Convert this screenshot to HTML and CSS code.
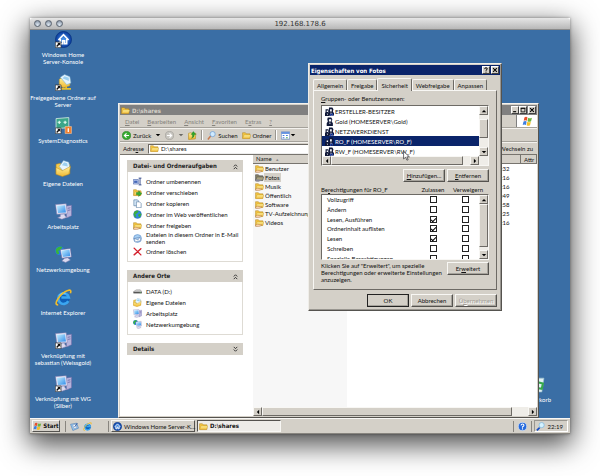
FILE: index.html
```
<!DOCTYPE html>
<html lang="de">
<head>
  <meta charset="UTF-8">
  <meta name="viewport" content="width=device-width,initial-scale=1.0">
  <title>192.168.178.6</title>
  <link rel="stylesheet" href="styles.css">
</head>
<body>

  <!-- Symbole -->
  <svg class="sprite" aria-hidden="true">
    <defs>
      <linearGradient id="g-screen" x1="0" y1="0" x2="1" y2="1"><stop offset="0" stop-color="#c8f0ff"/><stop offset="1" stop-color="#2f8ce8"/></linearGradient>
      <linearGradient id="g-folder" x1="0" y1="0" x2="0" y2="1"><stop offset="0" stop-color="#fff3a0"/><stop offset="1" stop-color="#f0b832"/></linearGradient>
      <radialGradient id="g-home"><stop offset="0" stop-color="#4f9cf0"/><stop offset="1" stop-color="#083a9c"/></radialGradient>
    </defs>
    <symbol id="shortcut" viewBox="0 0 16 16">
      <path fill="#fff" stroke="#222" stroke-width=".6" d="M.3 10.3h5.4v5.4H.3z"/>
      <path fill="#111" d="M2 11h3v3l-1-1-2 2-.9-.9L3 12z"/>
    </symbol>
    <symbol id="home" viewBox="0 0 16 16">
      <circle cx="8" cy="8" r="7.6" fill="url(#g-home)" stroke="#06307c" stroke-width=".6"/>
      <path fill="none" stroke="#fff" stroke-width="1.5" d="M3.2 8.5 8 3.4l4.8 5.1M5 7.5V12h2.2V9.2h1.8V12H11V7.5"/>
    </symbol>
    <symbol id="folder" viewBox="0 0 16 16">
      <path fill="#f2c544" stroke="#a97a12" stroke-width=".8" d="M1 13V3h5l1.500 2H14v8z"/>
      <path fill="url(#g-folder)" stroke="#c2901c" stroke-width=".6" d="M1 13.500 3.500 7H15.500L13.500 13.500z"/>
    </symbol>
    <symbol id="shared" viewBox="0 0 16 16">
      <use href="#folder"/>
      <path fill="#f7cfa8" stroke="#9a6a3c" stroke-width=".7" d="M1 12.500 4.500 11l5 1 2-.5v2L6 15.500 1 15z"/>
    </symbol>
    <symbol id="shared-sel" viewBox="0 0 16 16">
      <path fill="#8b8464" stroke="#4a4a50" d="M1 13V3h5l1.500 2H14v8z"/>
      <path fill="#aaa27c" stroke="#555" d="M1 13.500 3.500 7H15.500L13.500 13.500z"/>
      <path fill="#889" d="M1 12.500 4.500 11l5 1 2-.5v2L6 15.500 1 15z"/>
    </symbol>
    <symbol id="docs" viewBox="0 0 16 16">
      <path fill="#f5cc4e" stroke="#b8861c" stroke-width=".5" d="M1 13V4l4-1 2 2 7-1v9z"/>
      <path fill="#e8f6ff" stroke="#6aa4cc" stroke-width=".5" d="M4 6 8 .5l5 1.500 1 6-5 4z"/>
      <path fill="#9cd0f0" d="m6.500 5 2-3 3 1 .5 3z"/>
      <path fill="url(#g-folder)" stroke="#c2901c" stroke-width=".5" d="M1 13.500V7l6 3 7.500-4-1.500 7.500-6 2z"/>
    </symbol>
    <symbol id="netfolder" viewBox="0 0 16 16">
      <path fill="url(#g-folder)" stroke="#c2901c" stroke-width=".5" d="M4 5 7 3l7 2v6l-6 2-4-2z"/>
      <path fill="#e4f4ff" stroke="#74a8cc" stroke-width=".5" d="M5 3 9 .5l5 2 1 6-4 1.500z"/>
      <path fill="#9cd0f0" d="m7 4 2-2 4 1.500v3z"/>
      <path fill="none" stroke="#e8c030" stroke-width="1.500" d="M6 14h9M10.500 11v3"/>
    </symbol>
    <symbol id="diag" viewBox="0 0 16 16">
      <path fill="#3ba68a" stroke="#cfe6df" stroke-width=".8" d="m1 1.500 12-1v9.500L1 11z"/>
      <path fill="none" stroke="#e8fff4" d="M2.500 5h3M4 3.500v3M8 5h3M9.500 3.500v3"/>
      <path fill="#f08030" stroke="#ffd2a8" stroke-width=".5" d="M9.500 9H15.500v6.500h-6z"/>
      <path stroke="#fff" stroke-width="1.200" d="M12.500 10.500v3.500"/>
    </symbol>
    <symbol id="computer" viewBox="0 0 16 16">
      <path fill="#b8b4dc" stroke="#716ca8" stroke-width=".5" d="m10 3 5.500-1V12L11 14z"/>
      <path stroke="#66629c" stroke-width=".7" d="m12 5 2.500-.5M12 7l2.500-.5"/>
      <path fill="#ecebfa" stroke="#7d7aac" stroke-width=".5" d="m.5 1.500 10-.8 1 9.300-9.800.6z"/>
      <path fill="url(#g-screen)" d="m1.700 2.600 7.800-.6.800 7-7.500.4z"/>
      <path fill="#dcdaf0" stroke="#7d7aac" stroke-width=".5" d="m5 10.500 4-.2.500 2 2 1-5 2-4-1.500 2.500-1z"/>
    </symbol>
    <symbol id="network" viewBox="0 0 16 16">
      <circle cx="4.500" cy="4.500" r="4.300" fill="#2a7be0"/>
      <path fill="#38b43c" d="M1 2.500Q4-.5 7 1L5 4 3 4.500 4 7 2.500 8Q0 6 1 2.500z"/>
      <path fill="#ecebfa" stroke="#66629c" stroke-width=".5" d="m5 3.500 9.500-1.200 1 8-9 1.200z"/>
      <path fill="url(#g-screen)" d="m6 4.400 7.600-1 .8 6-7 1z"/>
      <path fill="#dcdaf0" stroke="#7d7aac" stroke-width=".5" d="m9 11.500 3-.4 2.500 2-4.500 2.400-3.500-1.500z"/>
    </symbol>
    <symbol id="ie" viewBox="0 0 16 16">
      <circle cx="8.500" cy="8.500" r="5.500" fill="#0f5fb8"/>
      <path fill="none" stroke="#3ba6f0" stroke-width="2.500" d="M12.500 11.500A5 5 0 1 1 13 8H6"/>
      <path fill="none" stroke="#b4e6ff" stroke-width=".7" d="M4 6q2-3 6-2"/>
      <path fill="none" stroke="#f3bd28" stroke-width="1.500" d="M3 15Q-1 15 3 9T12 1.500Q16 0 14.500 4"/>
    </symbol>
    <symbol id="bin" viewBox="0 0 16 16">
      <path fill="#dff0f4" stroke="#9cc2cc" stroke-width=".6" d="M2 2h13l-2 13H4z"/>
      <path fill="none" stroke="#35a84c" stroke-width="2" d="M7 11 10 6l4 1-1 5z"/>
    </symbol>
    <symbol id="back" viewBox="0 0 16 16">
      <circle cx="8" cy="8" r="7.300" fill="#36ab30" stroke="#1c7a1a"/>
      <path fill="none" stroke="#fff" stroke-width="2" d="M12.500 8H4.500M8 4.200 4.200 8 8 11.800"/>
    </symbol>
    <symbol id="forward" viewBox="0 0 16 16">
      <circle cx="8" cy="8" r="7.300" fill="#c8c6c0" stroke="#9a9892"/>
      <path fill="none" stroke="#fff" stroke-width="2" d="M3.500 8h8M8 4.200 11.800 8 8 11.800"/>
    </symbol>
    <symbol id="up" viewBox="0 0 16 16">
      <path fill="url(#g-folder)" stroke="#b08418" d="M1 15V4l5-1 2 2 6-1-1 10z"/>
      <path fill="#2da82a" stroke="#14701a" stroke-width=".6" d="M9.500 1 14 6h-2.500q0 5-5 7 2-3 1.500-7H5.500z"/>
    </symbol>
    <symbol id="search" viewBox="0 0 16 16">
      <path stroke="#c77a50" stroke-width="2.600" d="m1.500 15 5-6"/>
      <circle cx="10" cy="5.500" r="4.600" fill="#cfeaff" stroke="#6e9cd0" stroke-width="1.300"/>
    </symbol>
    <symbol id="lens" viewBox="0 0 16 16">
      <path stroke="#1b4fc4" stroke-width="3" d="m1.500 15 5-5"/>
      <circle cx="10" cy="5.500" r="4.600" fill="#d4f2ff" stroke="#7cb4dc" stroke-width="1.300"/>
    </symbol>
    <symbol id="views" viewBox="0 0 16 16">
      <path fill="#fff" stroke="#3a68b8" d="M.5 1.500h15v13H.5z"/>
      <path fill="#3f78d8" d="M1 2h14v3H1zM3 7h3v2H3zM9 7h3v2H9zM3 11h3v2H3z"/>
      <path fill="#3fa858" d="M9 11h3v2H9z"/>
    </symbol>
    <symbol id="flag" viewBox="0 0 16 16">
      <path fill="#e8502c" d="M3.500 2q2.500-1.500 4.500 0L7 7q-2-1.500-4.500 0z"/>
      <path fill="#6cb33e" d="M9 2.500q2.500 1.500 5.500 0l-1.300 5q-2.700 1.500-5.200 0z"/>
      <path fill="#3c7ee0" d="M2.200 8q2.500-1.500 4.500 0l-1 5Q3.500 11.500 1 13z"/>
      <path fill="#f4c026" d="M7.700 8.500q2.500 1.500 5.200 0l-1.200 5q-2.700 1.500-5 0z"/>
    </symbol>
    <symbol id="rename" viewBox="0 0 16 16">
      <path fill="#c9d8f4" stroke="#3a56a0" d="M.5 4.500h9v8h-9z"/>
      <path fill="#4668b8" d="M2 6.500h6v4H2z"/>
      <path fill="none" stroke="#223a80" stroke-width="1.500" d="M10 2h5M12.500 2v12M10 14h5"/>
    </symbol>
    <symbol id="move" viewBox="0 0 16 16">
      <use href="#folder"/>
      <path fill="#35ab32" stroke="#156c1a" stroke-width=".6" d="M6 8h4V5l5.500 5-5.500 5v-3H6z"/>
    </symbol>
    <symbol id="copy" viewBox="0 0 16 16">
      <path fill="#d6e8f8" stroke="#446c98" d="M1.500 1.500H8l2 2V12H1.500z"/>
      <path fill="#fff" stroke="#446c98" d="M6 5h5.500l3 3v7.500H6z"/>
    </symbol>
    <symbol id="web" viewBox="0 0 16 16">
      <circle cx="8" cy="8" r="7" fill="#3188e0" stroke="#1c5488" stroke-width=".6"/>
      <path fill="#3cae3c" d="M2 4Q6-1 10 2L7 6 4 7l2 4-2 2Q0 9 2 4zM10 7l4.500-1q1 4-3 7L9 10z"/>
    </symbol>
    <symbol id="mail" viewBox="0 0 16 16">
      <circle cx="8" cy="8" r="7" fill="#a8d0f4" stroke="#5888c4"/>
      <path fill="#fff" stroke="#5070a0" stroke-width=".8" d="m2 8 10-2.500 2 6L4 14zM2 8l7 2.500 3-5"/>
    </symbol>
    <symbol id="delete" viewBox="0 0 16 16">
      <path stroke="#d42330" stroke-width="2.500" stroke-linecap="round" d="m2 2 12 12M14 3 2 14"/>
    </symbol>
    <symbol id="drive" viewBox="0 0 16 16">
      <path fill="#d0d0d0" stroke="#777" stroke-width=".7" d="m1 8 5-3h7l2.500 3v3H1z"/>
      <path fill="#555" d="M1 8.500h14.500V11H1z"/><path stroke="#6d6" d="M12 10h2"/>
    </symbol>
    <symbol id="users" viewBox="0 0 16 16">
      <path fill="#101838" d="M7 1h6l2 3-1 4 2 3v4H6V9L7 7z"/>
      <path fill="#fff" d="M9 4h3v4L9 8zM9 10l2 3 1-3z"/>
      <path fill="#101838" d="M1 4h5l1 3-1 3 2 2v4H0v-5l1-2z"/>
      <path fill="#fff" d="M3 6h2.500v3H3zM3 12l1.500 2 1-2z"/>
      <path fill="#2848b0" d="M9 12h2v4H9zM12 11h2l1 4h-3z"/>
    </symbol>
    <symbol id="user" viewBox="0 0 16 16">
      <path fill="#101838" d="M5 1h6l2 3-1 4 2 3v5H3v-5l2-3-1-4z"/>
      <path fill="#fff" d="M7 4h4v4H7zM7 10l2 3 1-3z"/>
    </symbol>
    <symbol id="chev-up" viewBox="0 0 8 8"><path fill="none" stroke="#222" d="m2 4 2-2 2 2M2 7l2-2 2 2"/></symbol>
    <symbol id="chev-down" viewBox="0 0 8 8"><path fill="none" stroke="#222" d="m2 1 2 2 2-2M2 4l2 2 2-2"/></symbol>
    <symbol id="tri-left" viewBox="0 0 8 8"><path d="M5.500 1v6l-3-3z"/></symbol>
    <symbol id="tri-right" viewBox="0 0 8 8"><path d="M2.500 1v6l3-3z"/></symbol>
    <symbol id="tri-up" viewBox="0 0 8 8"><path d="M1 5.500h6l-3-3z"/></symbol>
    <symbol id="tri-down" viewBox="0 0 8 8"><path d="M1 2.500h6l-3 3z"/></symbol>
    <symbol id="x" viewBox="0 0 8 8"><path stroke="#000" stroke-width="1.400" d="m1.500 1.500 5 5m0-5-5 5"/></symbol>
    <symbol id="min" viewBox="0 0 8 8"><path d="M1.500 5.500h4V7h-4z"/></symbol>
    <symbol id="max" viewBox="0 0 8 8"><path fill="none" stroke="#000" d="M1.500 1.500h5v5h-5zM1 2h6"/></symbol>
    <symbol id="help" viewBox="0 0 8 8"><path fill="none" stroke="#000" stroke-width="1.300" d="M2.300 2.800q0-1.800 1.700-1.800t1.700 1.500Q5.700 3.500 4 4.200v.8M4 6.200v1.300"/></symbol>
    <symbol id="info" viewBox="0 0 16 16">
      <circle cx="8" cy="8" r="7.300" fill="#2468dc" stroke="#d8e8ff"/>
      <path fill="none" stroke="#fff" stroke-width="2" d="M5.500 6q0-2.500 2.500-2.500T10.500 6Q10.500 7.500 8 8.500v1.500M8 11.200v2"/>
    </symbol>
    <symbol id="desk" viewBox="0 0 16 16">
      <path fill="#9cc8f0" stroke="#4878b0" d="m1 4 11-2 3 9-10 4z"/>
      <path fill="#fff" stroke="#5878a0" stroke-width=".7" d="m5 5 5-1 2 6-5 1.500z"/>
      <path stroke="#2450a0" stroke-width="1.500" d="m8 9 5-7"/>
    </symbol>
  </svg>

  <main class="remote">
    <header class="remote-title">
      <div class="lights"><button aria-label="Schließen"></button><button aria-label="Minimieren"></button><button aria-label="Zoomen"></button></div>
      <h1>192.168.178.6</h1>
    </header>

    <div class="desktop">
      <!-- Desktop-Symbole -->
      <nav class="shortcuts">
        <a href="#"><svg><use href="#home"/><use href="#shortcut"/></svg>Windows Home<br>Server-Konsole</a>
        <a href="#"><svg><use href="#netfolder"/><use href="#shortcut"/></svg>Freigegebene Ordner auf<br>Server</a>
        <a href="#"><svg><use href="#diag"/><use href="#shortcut"/></svg>SystemDiagnostics</a>
        <a href="#"><svg><use href="#docs"/></svg>Eigene Dateien</a>
        <a href="#"><svg><use href="#computer"/></svg>Arbeitsplatz</a>
        <a href="#"><svg><use href="#network"/></svg>Netzwerkumgebung</a>
        <a href="#"><svg><use href="#ie"/></svg>Internet Explorer</a>
        <a href="#"><svg><use href="#computer"/><use href="#shortcut"/></svg>Verknüpfung mit<br>sebastian (Weissgold)</a>
        <a href="#"><svg><use href="#computer"/><use href="#shortcut"/></svg>Verknüpfung mit WG<br>(Silber)</a>
      </nav>
      <a class="bin" href="#"><svg><use href="#bin"/></svg>Papierkorb</a>

      <!-- Explorer -->
      <section class="explorer">
        <header class="explorer-title">
          <svg class="icon"><use href="#folder"/></svg><h2>D:\shares</h2>
          <div class="window-buttons">
            <button aria-label="Minimieren"><svg><use href="#min"/></svg></button>
            <button aria-label="Maximieren"><svg><use href="#max"/></svg></button>
            <button class="close" aria-label="Schließen"><svg><use href="#x"/></svg></button>
          </div>
        </header>
        <div class="menu-row">
          <nav class="menu">
            <button><u>D</u>atei</button><button><u>B</u>earbeiten</button><button><u>A</u>nsicht</button><button><u>F</u>avoriten</button><button>E<u>x</u>tras</button><button><u>?</u></button>
          </nav>
          <div class="brand"><svg><use href="#flag"/></svg></div>
        </div>
        <div class="toolbar">
          <button><svg class="icon"><use href="#back"/></svg>Zurück</button>
          <button class="drop" aria-label="Verlauf"><svg><use href="#tri-down"/></svg></button>
          <button aria-label="Vorwärts"><svg class="icon"><use href="#forward"/></svg></button>
          <button class="drop dim" aria-label="Verlauf vorwärts"><svg><use href="#tri-down"/></svg></button>
          <button aria-label="Aufwärts"><svg class="icon"><use href="#up"/></svg></button>
          <span class="line"></span>
          <button><svg class="icon"><use href="#search"/></svg>Suchen</button>
          <button><svg class="icon"><use href="#folder"/></svg>Ordner</button>
          <span class="line"></span>
          <button class="views" aria-label="Ansichten"><svg class="icon"><use href="#views"/></svg><svg class="arrow"><use href="#tri-down"/></svg></button>
        </div>
        <div class="address">
          <label for="address">Adre<u>s</u>se</label>
          <div class="address-box"><svg class="icon"><use href="#folder"/></svg><input id="address" type="text" value="D:\shares"></div>
          <button>Wechseln zu</button>
        </div>

        <div class="explorer-body">
          <aside class="tasks">
            <section class="task-group">
              <h3>Datei- und Ordneraufgaben<svg><use href="#chev-up"/></svg></h3>
              <ul>
                <li><svg class="icon"><use href="#rename"/></svg><a href="#">Ordner umbenennen</a></li>
                <li><svg class="icon"><use href="#move"/></svg><a href="#">Ordner verschieben</a></li>
                <li><svg class="icon"><use href="#copy"/></svg><a href="#">Ordner kopieren</a></li>
                <li><svg class="icon"><use href="#web"/></svg><a href="#">Ordner im Web veröffentlichen</a></li>
                <li><svg class="icon"><use href="#shared"/></svg><a href="#">Ordner freigeben</a></li>
                <li><svg class="icon"><use href="#mail"/></svg><a href="#">Dateien in diesem Ordner in E-Mail<br>senden</a></li>
                <li><svg class="icon"><use href="#delete"/></svg><a href="#">Ordner löschen</a></li>
              </ul>
            </section>
            <section class="task-group">
              <h3>Andere Orte<svg><use href="#chev-up"/></svg></h3>
              <ul>
                <li><svg class="icon"><use href="#drive"/></svg><a href="#">DATA (D:)</a></li>
                <li><svg class="icon"><use href="#docs"/></svg><a href="#">Eigene Dateien</a></li>
                <li><svg class="icon"><use href="#computer"/></svg><a href="#">Arbeitsplatz</a></li>
                <li><svg class="icon"><use href="#network"/></svg><a href="#">Netzwerkumgebung</a></li>
              </ul>
            </section>
            <section class="task-group">
              <h3>Details<svg><use href="#chev-down"/></svg></h3>
            </section>
          </aside>

          <div class="files">
            <table>
              <thead><tr><th class="col-name">Name <span class="sort">▲</span></th><th></th><th class="col-attr">Attr</th></tr></thead>
              <tbody>
                <tr><td><svg class="icon"><use href="#shared"/></svg><span>Benutzer</span></td><td>:32</td><td></td></tr>
                <tr class="selected"><td><svg class="icon"><use href="#shared-sel"/></svg><span>Fotos</span></td><td>:16</td><td></td></tr>
                <tr><td><svg class="icon"><use href="#shared"/></svg><span>Musik</span></td><td>:16</td><td></td></tr>
                <tr><td><svg class="icon"><use href="#folder"/></svg><span>Öffentlich</span></td><td>:49</td><td></td></tr>
                <tr><td><svg class="icon"><use href="#shared"/></svg><span>Software</span></td><td>:58</td><td></td></tr>
                <tr><td><svg class="icon"><use href="#shared"/></svg><span>TV-Aufzeichnungen</span></td><td>:25</td><td></td></tr>
                <tr><td><svg class="icon"><use href="#shared"/></svg><span>Videos</span></td><td>:16</td><td></td></tr>
              </tbody>
            </table>
            <div class="files-rest"></div>
            <div class="scroll-h">
              <button aria-label="Nach links"><svg><use href="#tri-left"/></svg></button>
              <span class="thumb"></span>
              <button aria-label="Nach rechts"><svg><use href="#tri-right"/></svg></button>
            </div>
          </div>
        </div>
      </section>

      <!-- Eigenschaften -->
      <section class="dialog" role="dialog" aria-labelledby="dialog-title">
        <header class="dialog-title">
          <h2 id="dialog-title">Eigenschaften von Fotos</h2>
          <div class="window-buttons">
            <button aria-label="Hilfe"><svg><use href="#help"/></svg></button>
            <button class="close" aria-label="Schließen"><svg><use href="#x"/></svg></button>
          </div>
        </header>
        <nav class="tabs">
          <button>Allgemein</button><button>Freigabe</button><button class="active">Sicherheit</button><button>Webfreigabe</button><button>Anpassen</button>
        </nav>
        <div class="panel">
          <p class="caption"><u>G</u>ruppen- oder Benutzernamen:</p>
          <div class="listbox">
            <div class="list-main">
              <ul class="users">
                <li><svg class="icon"><use href="#users"/></svg>ERSTELLER-BESITZER</li>
                <li><svg class="icon"><use href="#user"/></svg>Gold (HOMESERVER\Gold)</li>
                <li><svg class="icon"><use href="#users"/></svg>NETZWERKDIENST</li>
                <li class="active"><svg class="icon"><use href="#users"/></svg>RO_F (HOMESERVER\RO_F)</li>
                <li><svg class="icon"><use href="#users"/></svg>RW_F (HOMESERVER\RW_F)</li>
              </ul>
              <div class="scroll-h">
                <button aria-label="Nach links"><svg><use href="#tri-left"/></svg></button>
                <span class="thumb"></span>
                <button aria-label="Nach rechts"><svg><use href="#tri-right"/></svg></button>
              </div>
            </div>
            <div class="scroll-v user-scroll">
              <button aria-label="Nach oben"><svg><use href="#tri-up"/></svg></button>
              <span class="thumb"></span>
              <button aria-label="Nach unten"><svg><use href="#tri-down"/></svg></button>
            </div>
          </div>
          <div class="panel-buttons">
            <button class="btn"><u>H</u>inzufügen...</button><button class="btn"><u>E</u>ntfernen</button>
          </div>
          <div class="rights-head"><span>Be<u>r</u>echtigungen für RO_F</span><span>Zulassen</span><span>Verweigern</span></div>
          <div class="listbox rights">
            <div class="rights-clip">
              <table>
                <tr><td>Vollzugriff</td><td><input type="checkbox" aria-label="Vollzugriff zulassen"></td><td><input type="checkbox" aria-label="Vollzugriff verweigern"></td></tr>
                <tr><td>Ändern</td><td><input type="checkbox" aria-label="Ändern zulassen"></td><td><input type="checkbox" aria-label="Ändern verweigern"></td></tr>
                <tr><td>Lesen, Ausführen</td><td><input type="checkbox" checked aria-label="Ausführen zulassen"></td><td><input type="checkbox" aria-label="Ausführen verweigern"></td></tr>
                <tr><td>Ordnerinhalt auflisten</td><td><input type="checkbox" checked aria-label="Auflisten zulassen"></td><td><input type="checkbox" aria-label="Auflisten verweigern"></td></tr>
                <tr><td>Lesen</td><td><input type="checkbox" checked aria-label="Lesen zulassen"></td><td><input type="checkbox" aria-label="Lesen verweigern"></td></tr>
                <tr><td>Schreiben</td><td><input type="checkbox" aria-label="Schreiben zulassen"></td><td><input type="checkbox" aria-label="Schreiben verweigern"></td></tr>
                <tr><td>Spezielle Berechtigungen</td><td><input type="checkbox" aria-label="Spezielle zulassen"></td><td><input type="checkbox" aria-label="Spezielle verweigern"></td></tr>
              </table>
            </div>
            <div class="scroll-v">
              <button aria-label="Nach oben"><svg><use href="#tri-up"/></svg></button>
              <span class="thumb"></span>
              <button aria-label="Nach unten"><svg><use href="#tri-down"/></svg></button>
            </div>
          </div>
          <div class="note">
            <p>Klicken Sie auf "Erweitert", um spezielle<br>Berechtigungen oder erweiterte Einstellungen<br>anzuzeigen.</p>
            <button class="btn">Er<u>w</u>eitert</button>
          </div>
        </div>
        <footer class="dialog-buttons">
          <button class="btn default">OK</button><button class="btn">Abbrechen</button><button class="btn" disabled>Ü<u>b</u>ernehmen</button>
        </footer>
        <svg class="cursor" viewBox="0 0 8 12"><path fill="#fff" stroke="#222" stroke-width=".8" d="M.5.500v9L3 7.500 4.500 11 6 10.500 4.500 7h3z"/></svg>
      </section>
    </div>

    <!-- Taskleiste -->
    <footer class="taskbar">
      <button class="start"><svg class="icon"><use href="#flag"/></svg>Start</button>
      <div class="quick">
        <button aria-label="Desktop anzeigen"><svg class="icon"><use href="#desk"/></svg></button>
        <button aria-label="Internet Explorer"><svg class="icon"><use href="#ie"/></svg></button>
      </div>
      <div class="running">
        <button><svg class="icon"><use href="#home"/></svg>Windows Home Server-K...</button>
        <button class="active"><svg class="icon"><use href="#folder"/></svg>D:\shares</button>
      </div>
      <div class="lang"><svg class="icon"><use href="#info"/></svg></div>
      <div class="tray"><svg class="icon"><use href="#lens"/></svg><time>22:19</time></div>
    </footer>
  </main>

</body>
</html>
```
FILE: styles.css
```
/* Grundlagen */
* { margin:0; padding:0; box-sizing:border-box; }
body {
  background:#fff; color:#111; min-height:100vh; padding:18px 30px 42px;
  display:flex; flex-direction:column; overflow:hidden;
  font:6px/7px "Lato",sans-serif;
}
button, input { font:inherit; color:inherit; background:none; border:none; border-radius:0; white-space:nowrap; }
button { display:flex; align-items:center; justify-content:center; }
a { color:inherit; text-decoration:none; }
ul { list-style:none; }
h1, h2, h3 { font-size:inherit; }
svg { display:block; flex:none; overflow:visible; }
.sprite { position:absolute; width:0; height:0; }
.icon { width:9px; height:9px; }

/* Fenster der Remoteverbindung */
.remote {
  flex:1; display:flex; flex-direction:column;
  box-shadow:0 0 3px rgba(0,0,0,.4), 0 9px 26px 2px rgba(0,0,0,.7);
}
.remote-title {
  height:12px; display:grid; grid-template-columns:1fr auto 1fr; align-items:center;
  background:linear-gradient(#e6e6e6,#b8b8b8); border-bottom:1px solid #8a8a8a;
  border-radius:3px 3px 0 0;
}
.remote-title h1 { font:7px/10px "DejaVu Sans",sans-serif; color:#333; }
.lights { display:flex; gap:4px; padding-left:4px; }
.lights button {
  width:7px; height:7px; border-radius:50%; border:1px solid #59626e;
  background:radial-gradient(circle at 50% 80%,#e0eaf4,#7e8c9e);
}

/* Desktop */
.desktop { position:relative; flex:1; background:#3a6ea5; overflow:hidden; }
.shortcuts { width:66px; display:grid; grid-template-columns:100%; grid-auto-rows:43px; padding-top:1px; }
.shortcuts a, .bin {
  display:flex; flex-direction:column; align-items:center;
  color:#fff; text-align:center; white-space:nowrap;
}
.shortcuts svg, .bin svg { width:17px; height:17px; margin-bottom:3px; }
.bin { position:absolute; right:19px; bottom:15px; }

/* Explorer */
.explorer {
  position:absolute; left:88px; top:73px; right:31px; bottom:0;
  display:flex; flex-direction:column; padding:1px;
  background:#d4d0c8; border:1px solid #f4f2ee; border-right-color:#55534f; border-bottom-color:#55534f;
}
.explorer-title {
  display:flex; align-items:center; gap:2px; height:10px; padding:0 1px;
  background:#808080; color:#d4d0c8;
}
.explorer-title h2, .dialog-title h2 { flex:1; font:bold 6px/9px "DejaVu Sans Condensed",sans-serif; }
.window-buttons { display:flex; }
.window-buttons button {
  width:8px; height:8px; background:#d4d0c8; color:#000;
  border:1px solid #fff; border-right-color:#404040; border-bottom-color:#404040;
}
.window-buttons svg { width:6px; height:6px; }
.window-buttons .close { margin-left:1px; }
.menu-row { display:flex; height:13px; border-bottom:1px solid #a5a29b; }
.menu { flex:1; display:flex; gap:8px; padding-left:5px; color:#85827c; }
.brand { width:21px; display:grid; place-items:center; background:#fff; border-left:1px solid #808080; }
.brand svg { width:11px; height:11px; }
.toolbar {
  display:flex; align-items:center; gap:4px; height:14px; padding-left:2px;
  border-top:1px solid #f4f2ee; border-bottom:1px solid #a5a29b;
}
.toolbar button { gap:2px; }
.toolbar .drop svg, .arrow { width:6px; height:6px; }
.toolbar .views { gap:0; }
.dim { opacity:.5; }
.line { width:2px; height:10px; border-left:1px solid #99968f; border-right:1px solid #fff; }
.address {
  display:flex; align-items:center; gap:4px; height:12px; padding:0 4px 0 3px;
  border-top:1px solid #f4f2ee;
}
.address-box {
  flex:1; height:10px; display:flex; align-items:center; gap:2px; padding-left:1px;
  background:#fff; border:1px solid #6d6a65; border-right-color:#eee; border-bottom-color:#eee;
}
.address-box input { flex:1; min-width:0; outline:none; }

.explorer-body { flex:1; min-height:0; display:flex; background:#fff; border-top:1px solid #77746e; }
.tasks { flex:none; width:133px; padding:5px 10px 0 7px; display:flex; flex-direction:column; gap:8px; }
.task-group h3 {
  display:flex; align-items:center; justify-content:space-between; height:12px; padding:0 4px 0 6px;
  background:#d4d0c8; color:#222; font:bold 6px/12px "DejaVu Sans Condensed",sans-serif;
}
.task-group h3 svg { width:7px; height:7px; }
.task-group ul { padding:4px 5px; border:1px solid #dedbd4; border-top:none; }
.task-group li { display:flex; align-items:center; gap:4px; min-height:10px; margin-bottom:1px; white-space:nowrap; }

.files { flex:1; min-width:0; display:flex; flex-direction:column; }
.files table { width:100%; border-collapse:collapse; table-layout:fixed; }
.files th {
  height:8px; background:#d4d0c8; text-align:left; font-weight:normal; padding-left:3px; white-space:nowrap;
  border-right:1px solid #77746e; border-bottom:1px solid #77746e;
}
.sort { font-size:4px; color:#888; padding-left:2px; }
.col-name { width:94px; }
.col-attr { width:16px; }
.files td { height:9px; text-align:right; padding:0 11px 0 0; white-space:nowrap; }
.files td:first-child { display:flex; align-items:center; background:#f7f7f7; padding:0 0 0 2px; text-align:left; }
.files td:first-child span { padding:1px; }
.files .selected span { background:#d4d0c8; padding-right:3px; }
.files-rest { flex:1; background:linear-gradient(#f7f7f7,#f7f7f7) 0 0/94px 100% no-repeat; }

/* Bildlaufleisten */
.scroll-h, .scroll-v { display:flex; background:#efede8; }
.scroll-h { height:9px; }
.scroll-v { width:9px; flex-direction:column; }
.scroll-h button, .scroll-v button, .thumb {
  background:#d4d0c8; border:1px solid #f8f7f4; border-right-color:#6d6a65; border-bottom-color:#6d6a65;
}
.scroll-h button, .scroll-v button { width:9px; height:9px; }
.scroll-h svg, .scroll-v svg { width:6px; height:6px; }
.files .thumb { flex:1; margin-right:16px; }

/* Eigenschaftendialog */
.dialog {
  position:absolute; left:278px; top:33px; width:194px; padding:1px 1px 3px;
  background:#d4d0c8; border:1px solid #efede8; border-right-color:#55534f; border-bottom-color:#55534f;
  box-shadow:inset -1px -1px #999690;
}
.dialog-title { display:flex; align-items:center; height:10px; padding:0 1px; background:#0a246a; color:#fff; }
.tabs { display:flex; align-items:flex-end; height:15px; padding:0 3px; }
.tabs button {
  height:11px; padding:0 3px; border:1px solid #f8f7f4; border-right-color:#6d6a65; border-bottom:none;
  border-radius:2px 2px 0 0;
}
.tabs .active { height:13px; margin-bottom:-1px; background:#d4d0c8; position:relative; }
.panel {
  margin:0 3px; padding:4px 7px 6px;
  border:1px solid #f8f7f4; border-right-color:#6d6a65; border-bottom-color:#6d6a65;
}
.caption { height:10px; }
.listbox {
  display:flex; background:#fff; border:1px solid #6d6a65;
  border-right-color:#f8f7f4; border-bottom-color:#f8f7f4;
}
.list-main { flex:1; min-width:0; }
.users li { display:flex; align-items:center; gap:1px; height:10px; padding-left:3px; }
.users .active { background:#0a246a; color:#fff; }
.list-main .thumb { flex:1; margin-right:7px; }
.user-scroll { padding-bottom:9px; }
.user-scroll .thumb { height:19px; margin:4px 0 auto; }
.panel-buttons { display:flex; justify-content:flex-end; gap:2px; padding:3px 0 2px; }
.btn {
  width:42px; height:13px; background:#d4d0c8; border:1px solid #f8f7f4;
  border-right-color:#55534f; border-bottom-color:#55534f; box-shadow:inset -1px -1px #a5a29b;
}
.btn:disabled { color:#a09d96; text-shadow:1px 1px #fff; }
.btn.default { border-color:#222; }
.rights-head { display:grid; grid-template-columns:1fr 36px 34px; height:10px; align-items:center; text-align:center; padding-right:4px; }
.rights-head span:first-child { text-align:left; }
.rights { height:66px; }
.rights-clip { flex:1; overflow:hidden; }
.rights table { width:100%; height:68px; border-collapse:collapse; table-layout:fixed; }
.rights td { width:36px; text-align:center; vertical-align:middle; }
.rights td:first-child { width:auto; text-align:left; padding-left:5px; white-space:nowrap; }
.rights td:last-child { width:28px; }
.rights input {
  appearance:none; display:block; width:7px; height:7px; margin:0 auto;
  background:#fff; border:1px solid #222;
}
.rights input:checked::after {
  content:""; display:block; width:4px; height:2px;
  border-left:1px solid #000; border-bottom:1px solid #000; transform:translateY(1px) rotate(-45deg);
}
.rights .thumb { flex:1; margin-bottom:3px; }
.note { display:flex; justify-content:space-between; align-items:flex-start; padding-top:2px; white-space:nowrap; }
.note p { width:0; }
.dialog-buttons { display:flex; justify-content:flex-end; gap:2px; padding:4px 3px 0; }
.cursor { position:absolute; left:94px; top:87px; width:7px; height:10px; }

/* Taskleiste */
.taskbar {
  display:flex; align-items:center; gap:2px; height:16px; padding:1px 2px;
  background:#d4d0c8; border-top:1px solid #f8f7f4; border-bottom:1px solid #88857f;
}
.taskbar > .start, .running button {
  height:12px; border:1px solid #f8f7f4; border-right-color:#55534f; border-bottom-color:#55534f;
}
.taskbar .start { width:28px; gap:1px; font:bold 6px/10px "DejaVu Sans Condensed",sans-serif; }
.quick { display:flex; gap:4px; width:44px; height:11px; align-items:center; margin-left:3px; padding-left:4px; border-left:1px solid #88857f; border-right:1px solid #88857f; }
.running { flex:1; display:flex; gap:2px; }
.running button { width:84px; justify-content:flex-start; gap:2px; padding-left:1px; }
.running .active {
  background:#eeece8; font:bold 6px/10px "DejaVu Sans Condensed",sans-serif;
  border-color:#55534f #f8f7f4 #f8f7f4 #55534f;
}
.lang { height:11px; padding:1px 4px; border-left:1px solid #88857f; border-right:1px solid #88857f; }
.tray {
  display:flex; align-items:center; gap:3px; height:12px; padding:0 4px 0 1px;
  border:1px solid #99968f; border-right-color:#fff; border-bottom-color:#fff;
}
```
